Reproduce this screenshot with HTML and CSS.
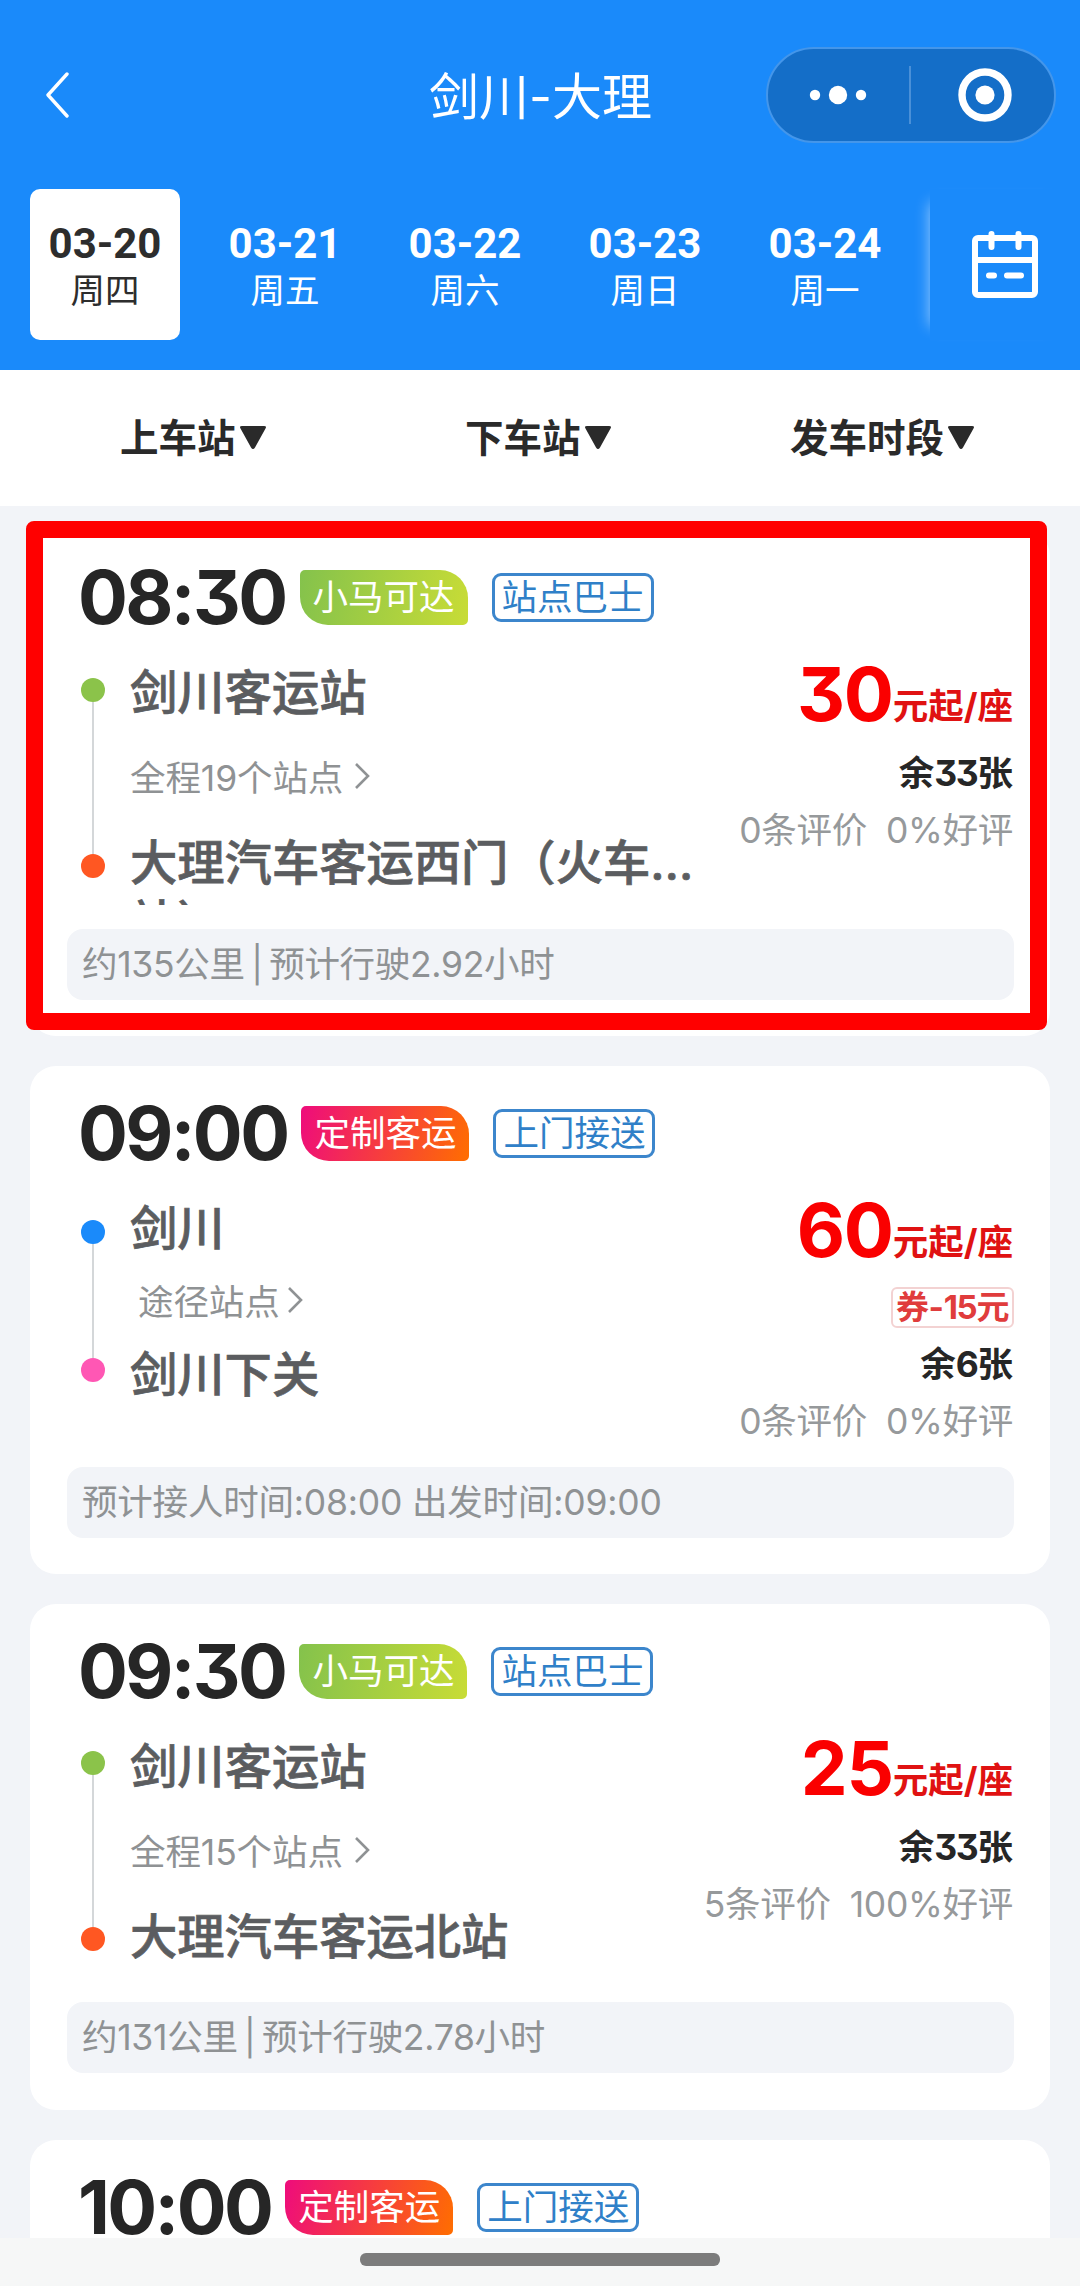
FILE: index.html
```
<!DOCTYPE html>
<html lang="zh-CN">
<head>
<meta charset="utf-8">
<title>剑川-大理</title>
<link rel="stylesheet" href="styles.css">
</head>
<body>
<div class="screen">
  <header class="header">
    <div class="navbar">
      <svg class="back" viewBox="0 0 24 46"><path d="M22 2 3 23l19 21" fill="none" stroke="#fff" stroke-width="3.4" stroke-linecap="round" stroke-linejoin="round"/></svg>
      <h1 class="title">剑川-大理</h1>
      <div class="capsule">
        <svg class="more" viewBox="0 0 58 20"><circle cx="6" cy="10" r="5.2" fill="#fff"/><circle cx="29" cy="10" r="9.2" fill="#fff"/><circle cx="52" cy="10" r="5.2" fill="#fff"/></svg>
        <span class="capsule-line"></span>
        <svg class="target" viewBox="0 0 54 54"><circle cx="27" cy="27" r="23" fill="none" stroke="#fff" stroke-width="7.4"/><circle cx="27" cy="27" r="9.6" fill="#fff"/></svg>
      </div>
    </div>
    <div class="dates">
      <div class="date date-active"><b>03-20</b><span>周四</span></div>
      <div class="date"><b>03-21</b><span>周五</span></div>
      <div class="date"><b>03-22</b><span>周六</span></div>
      <div class="date"><b>03-23</b><span>周日</span></div>
      <div class="date"><b>03-24</b><span>周一</span></div>
      <div class="calendar">
        <svg viewBox="0 0 68 70" fill="none" stroke="#fff" stroke-width="6" stroke-linecap="round"><rect x="4" y="9" width="60" height="57" rx="3"/><path d="M4 31h60M20.500 5v13M47.500 5v13M18 46.500h5M36 46.500h14"/></svg>
      </div>
    </div>
  </header>

  <nav class="filters">
    <div class="filter filter-from">上车站<svg viewBox="0 0 28 25"><path d="M3 1h22q3 0 1.500 2.500L16 22.500q-2 3-4 0L1.500 3.500Q0 1 3 1z"/></svg></div>
    <div class="filter filter-to">下车站<svg viewBox="0 0 28 25"><path d="M3 1h22q3 0 1.500 2.500L16 22.500q-2 3-4 0L1.500 3.500Q0 1 3 1z"/></svg></div>
    <div class="filter filter-time">发车时段<svg viewBox="0 0 28 25"><path d="M3 1h22q3 0 1.500 2.500L16 22.500q-2 3-4 0L1.500 3.500Q0 1 3 1z"/></svg></div>
  </nav>

  <main class="list">
    <article class="card">
      <div class="card-top"><span class="time">08:30</span><span class="brand brand-green">小马可达</span><span class="kind">站点巴士</span></div>
      <div class="trip">
        <div class="track"><i class="dot green"></i><i class="rail"></i><i class="dot orange"></i></div>
        <div class="stations">
          <div class="station">剑川客运站</div>
          <div class="via"><span>全程19个站点</span><svg viewBox="0 0 16 28"><path d="M2 2l12 12L2 26"/></svg></div>
          <div class="station station-end">大理汽车客运西门（火车站）</div>
        </div>
        <div class="offer">
          <div class="price"><b>30</b>元起/座</div>
          <div class="left">余<em>33</em>张</div>
          <div class="reviews"><span>0条评价</span><span>0%好评</span></div>
        </div>
      </div>
      <div class="info info-route">约135公里 | 预计行驶2.92小时</div>
      <div class="highlight"></div>
    </article>

    <article class="card card-door">
      <div class="card-top"><span class="time">09:00</span><span class="brand brand-pink">定制客运</span><span class="kind">上门接送</span></div>
      <div class="trip">
        <div class="track"><i class="dot blue"></i><i class="rail"></i><i class="dot pink"></i></div>
        <div class="stations">
          <div class="station">剑川</div>
          <div class="via"><span>途径站点</span><svg viewBox="0 0 16 28"><path d="M2 2l12 12L2 26"/></svg></div>
          <div class="station station-end">剑川下关</div>
        </div>
        <div class="offer">
          <div class="price"><b>60</b>元起/座</div>
          <div class="coupon">券-<em>15</em>元</div>
          <div class="left">余<em>6</em>张</div>
          <div class="reviews"><span>0条评价</span><span>0%好评</span></div>
        </div>
      </div>
      <div class="info">预计接人时间:08:00 出发时间:09:00</div>
    </article>

    <article class="card card-short">
      <div class="card-top"><span class="time">09:30</span><span class="brand brand-green">小马可达</span><span class="kind">站点巴士</span></div>
      <div class="trip">
        <div class="track"><i class="dot green"></i><i class="rail"></i><i class="dot orange"></i></div>
        <div class="stations">
          <div class="station">剑川客运站</div>
          <div class="via"><span>全程15个站点</span><svg viewBox="0 0 16 28"><path d="M2 2l12 12L2 26"/></svg></div>
          <div class="station station-end">大理汽车客运北站</div>
        </div>
        <div class="offer">
          <div class="price"><b>25</b>元起/座</div>
          <div class="left">余<em>33</em>张</div>
          <div class="reviews"><span>5条评价</span><span>100%好评</span></div>
        </div>
      </div>
      <div class="info info-route">约131公里 | 预计行驶2.78小时</div>
    </article>

    <article class="card">
      <div class="card-top"><span class="time">10:00</span><span class="brand brand-pink">定制客运</span><span class="kind">上门接送</span></div>
    </article>
  </main>

  <footer class="homebar"><span></span></footer>
</div>
</body>
</html>
```
FILE: styles.css
```
* { box-sizing: border-box; }

body {
  margin: 0;
  font-family: Inter, "Noto Sans CJK SC", sans-serif;
  font-feature-settings: "cv09" 1;
  color: #262626;
  background: #f2f4f8;
}

em, i { font-style: normal; }
em { letter-spacing: -1.3px; }

.screen {
  width: 1080px;
  height: 2286px;
  display: flex;
  flex-direction: column;
  overflow: hidden;
}

/* Header */
.header {
  flex: none;
  height: 370px;
  background: #1a8afa;
  color: #fff;
}

.navbar {
  height: 189px;
  padding: 47px 24px 0 45px;
  display: grid;
  grid-template-columns: 350px 1fr 290px;
  align-items: center;
  align-content: start;
}

.back { width: 24px; height: 46px; }

.title {
  margin: 0;
  padding: 3px 0 0 34px;
  font-size: 50px;
  line-height: 92px;
  font-weight: 400;
  white-space: nowrap;
}

.capsule {
  height: 96px;
  display: flex;
  align-items: center;
  padding-left: 41px;
  border: 2px solid #4496ea;
  border-radius: 48px;
  background: #146ec8;
}

.more { width: 58px; height: 20px; }
.capsule-line { width: 2px; height: 58px; margin: 0 47px 0 42px; background: #4a90d8; }
.target { width: 54px; height: 54px; }

.dates {
  display: flex;
  padding-left: 30px;
  gap: 30px;
}

.date {
  width: 150px;
  height: 151px;
  padding-top: 30px;
  display: flex;
  flex-direction: column;
  align-items: center;
  border-radius: 10px;
}

.date b { font: 700 42px/50px Roboto, sans-serif; }
.date span { font-size: 34.5px; line-height: 43px; }
.date-active { background: #fff; color: #2d2d2d; }

.calendar {
  width: 150px;
  height: 151px;
  padding: 40px 0 0 41px;
  background: #1a8afa;
  box-shadow: -14px 0 14px -14px rgba(255, 255, 255, .55);
}

.calendar svg { display: block; width: 68px; height: 70px; }

/* Filters */
.filters {
  flex: none;
  height: 136px;
  padding-bottom: 1px;
  display: flex;
  background: #fff;
}

.filter {
  display: flex;
  align-items: center;
  padding-bottom: 6px;
  font-size: 38.500px;
  font-weight: 700;
  color: #2a2a2a;
}

.filter svg { width: 28px; height: 25px; margin: 6px 0 0 3px; fill: #2a2a2a; }
.filter-from { width: 345px; padding-left: 120px; }
.filter-to { width: 345px; padding-left: 120px; }
.filter-time { padding-left: 100px; }

/* Trip cards */
.list {
  flex: 1;
  min-height: 0;
  padding: 24px 30px 0;
  display: flex;
  flex-direction: column;
  gap: 30px;
  overflow: hidden;
}

.card {
  --dot-top: 53px;
  --rail: 152px;
  --via-gap: 30px;
  --body: 304px;
  flex: none;
  position: relative;
  height: 506px;
  padding: 39px 36px 0 37px;
  border-radius: 26px;
  background: #fff;
}

.card-door {
  --dot-top: 59px;
  --rail: 114px;
  --via-gap: 18px;
  --body: 306px;
  height: 508px;
}

.card-short { --dot-top: 52px; --body: 303px; }

.card-top {
  height: 56px;
  padding-left: 11px;
  display: flex;
  align-items: center;
}

.time {
  font-size: 74px;
  line-height: 56px;
  font-weight: 700;
  letter-spacing: -2.600px;
  color: #262626;
}

.brand {
  width: 168px;
  height: 55px;
  margin-left: 14px;
  border-radius: 5px 28px 5px 28px;
  font-size: 35.500px;
  line-height: 56px;
  text-align: center;
  color: #fff;
}

.brand-green { background: linear-gradient(100deg, #84c24c, #c8dc36); }
.brand-pink { background: linear-gradient(105deg, #ee0c7c, #ff6e00); }

.kind {
  width: 162px;
  height: 49px;
  margin-left: 24px;
  border: 3px solid #3c86cc;
  border-radius: 9px;
  font-size: 35.500px;
  line-height: 44px;
  text-align: center;
  color: #2f80c8;
}

.trip {
  height: var(--body);
  display: flex;
}

.track {
  width: 24px;
  margin-left: 14px;
  padding-top: var(--dot-top);
  display: flex;
  flex-direction: column;
  align-items: center;
}

.dot { width: 24px; height: 24px; border-radius: 50%; }
.rail { width: 2px; height: var(--rail); background: #d4d7d9; }
.green { background: #8bc34a; }
.orange { background: #ff5722; }
.blue { background: #1a8afa; }
.pink { background: #ff57b4; }

.stations {
  width: 565px;
  margin-left: 25px;
  padding-top: 40px;
}

.station {
  font-size: 47.300px;
  line-height: 56px;
  font-weight: 500;
  color: #5b5d60;
  -webkit-text-stroke: .7px #5b5d60;
}

.station-end {
  display: -webkit-box;
  -webkit-box-orient: vertical;
  -webkit-line-clamp: 1;
  height: 72px;
  line-height: 60px;
  overflow: hidden;
}

.via {
  display: flex;
  align-items: center;
  height: 56px;
  margin: calc(var(--via-gap) - 4px) 0 var(--via-gap);
  font-size: 35.500px;
  letter-spacing: -.1px;
  color: #8f9294;
}

.card-door .via { padding-left: 8px; }
.via svg { width: 16px; height: 28px; margin: 1px 0 0 11px; fill: none; stroke: #8f9294; stroke-width: 2.600; }
.card-door .via svg { margin-left: 7px; }

.offer {
  flex: 1;
  padding: 41px 1px 0 0;
  display: flex;
  flex-direction: column;
  align-items: flex-end;
  white-space: nowrap;
}

.price {
  display: flex;
  height: 56px;
  line-height: 56px;
  font-size: 35.500px;
  font-weight: 700;
  color: #e01212;
  padding-top: 13px;
}

.price b { margin-top: -13px; font-weight: 700; font-size: 74.500px; letter-spacing: -1.300px; color: #fa0000; }
.left { margin-top: 30px; line-height: 44px; font-size: 35.500px; font-weight: 700; }
.reviews { margin-top: 13px; display: flex; gap: 19px; line-height: 44px; font-size: 35.500px; letter-spacing: -.3px; color: #96999b; }

.coupon {
  height: 41px;
  margin: 29px -1px -15px 0;
  padding: 0 3px;
  border: 2px solid #f3d2d2;
  border-radius: 6px;
  font-size: 33px;
  line-height: 37px;
  font-weight: 700;
  letter-spacing: -.4px;
  color: #e03c3c;
}

.info {
  height: 71px;
  padding-left: 15px;
  border-radius: 16px;
  background: #f2f4f8;
  font-size: 35.500px;
  line-height: 71px;
  letter-spacing: -.2px;
  color: #8f9294;
}

.info-route { letter-spacing: -.3px; word-spacing: -3.200px; }

.highlight {
  position: absolute;
  left: -4px;
  top: -9px;
  width: 1021px;
  height: 509px;
  border: 17px solid #f00;
  border-radius: 8px;
}

/* System gesture bar */
.homebar {
  flex: none;
  height: 48px;
  padding-top: 15px;
  background: #f6f7f7;
}

.homebar span {
  display: block;
  width: 360px;
  height: 13px;
  margin: 0 auto;
  border-radius: 6px;
  background: #7c7c7c;
}
```
